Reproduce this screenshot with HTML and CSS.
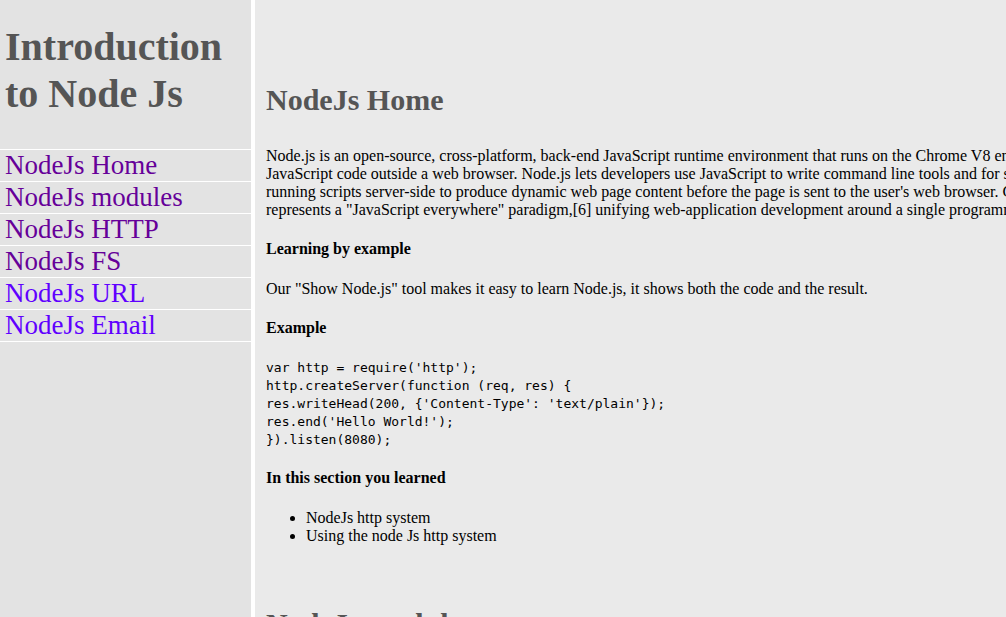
FILE: index.html
```html
<!DOCTYPE html>
<html lang="en">
<head>
<meta charset="utf-8">
<title>Introduction to Node Js</title>
<link rel="stylesheet" href="styles.css">
</head>
<body>
<nav class="navbar" id="navbar">
  <header class="nav-title">Introduction to Node Js</header>
  <a class="nav-link visited" href="#NodeJs_Home">NodeJs Home</a>
  <a class="nav-link visited" href="#NodeJs_modules">NodeJs modules</a>
  <a class="nav-link visited" href="#NodeJs_HTTP">NodeJs HTTP</a>
  <a class="nav-link visited" href="#NodeJs_FS">NodeJs FS</a>
  <a class="nav-link" href="#NodeJs_URL">NodeJs URL</a>
  <a class="nav-link last" href="#NodeJs_Email">NodeJs Email</a>
</nav>
<main class="main-doc" id="main-doc">
  <section class="main-section" id="NodeJs_Home">
    <header class="section-title">NodeJs Home</header>
    <p>Node.js is an open-source, cross-platform, back-end JavaScript runtime environment that runs on the Chrome V8 engine and executes JavaScript code outside a web browser. Node.js lets developers use JavaScript to write command line tools and for server-side scripting—running scripts server-side to produce dynamic web page content before the page is sent to the user's web browser. Consequently, Node.js represents a "JavaScript everywhere" paradigm,[6] unifying web-application development around a single programming language.</p>
    <h4>Learning by example</h4>
    <p>Our "Show Node.js" tool makes it easy to learn Node.js, it shows both the code and the result.</p>
    <h4>Example</h4>
    <p><code>var http = require('http');<br>http.createServer(function (req, res) {<br>res.writeHead(200, {'Content-Type': 'text/plain'});<br>res.end('Hello World!');<br>}).listen(8080);</code></p>
    <h4>In this section you learned</h4>
    <ul>
      <li>NodeJs http system</li>
      <li>Using the node Js http system</li>
    </ul>
  </section>
  <section class="main-section" id="NodeJs_modules">
    <header class="section-title">NodeJs modules</header>
    <p>Consider modules to be the same as JavaScript libraries. A set of functions you want to include in your application.</p>
    <h4>Built-in Modules</h4>
    <p>Node.js has a set of built-in modules which you can use without any further installation.</p>
    <h4>Example</h4>
    <p><code>var http = require('http');</code></p>
    <h4>In this section you learned</h4>
    <ul>
      <li>NodeJs modules</li>
      <li>Including a module</li>
    </ul>
  </section>
</main>
</body>
</html>
```
FILE: styles.css
```css
html, body {
  overflow: hidden;
}
body {
  margin: 0;
  background: #ffffff;
  display: flex;
  align-items: flex-start;
  font-family: "Liberation Serif", "Times New Roman", serif;
  font-size: 16px;
  color: #000;
}
.navbar {
  flex: 0 0 251px;
  height: 100vh;
  margin-right: 4px;
  background: #e3e3e3;
  display: flex;
  flex-direction: column;
}
.nav-title {
  margin: 23px 0 32px;
  padding-left: 5px;
  font-size: 40px;
  font-weight: bold;
  color: #555555;
}
.nav-link {
  display: block;
  padding-left: 5px;
  border-top: 1px solid #ffffff;
  font-size: 27px;
  color: #5f00ff;
  text-decoration: none;
}
.nav-link.visited {
  color: #660099;
}
.nav-link.last {
  border-bottom: 1px solid #ffffff;
}
.main-doc {
  flex: 0 0 auto;
  align-self: stretch;
  width: 905px;
  min-height: 100vh;
  padding: 38px 0 40px 11px;
  background: #eaeaea;
}
.main-section {
  padding-top: 46px;
}
.main-section:first-child {
  padding-top: 0;
  margin-top: 45px;
}
.section-title {
  margin: 0 0 30px;
  font-size: 30px;
  font-weight: bold;
  color: #555555;
}
.main-section p {
  margin: 16px 0;
}
.main-section h4 {
  font-size: 16px;
  margin: 21.28px 0;
}
.main-section code {
  font-family: "DejaVu Sans Mono", monospace;
  font-size: 13px;
}
.main-section ul {
  margin: 16px 0;
  padding-left: 40px;
}
```
